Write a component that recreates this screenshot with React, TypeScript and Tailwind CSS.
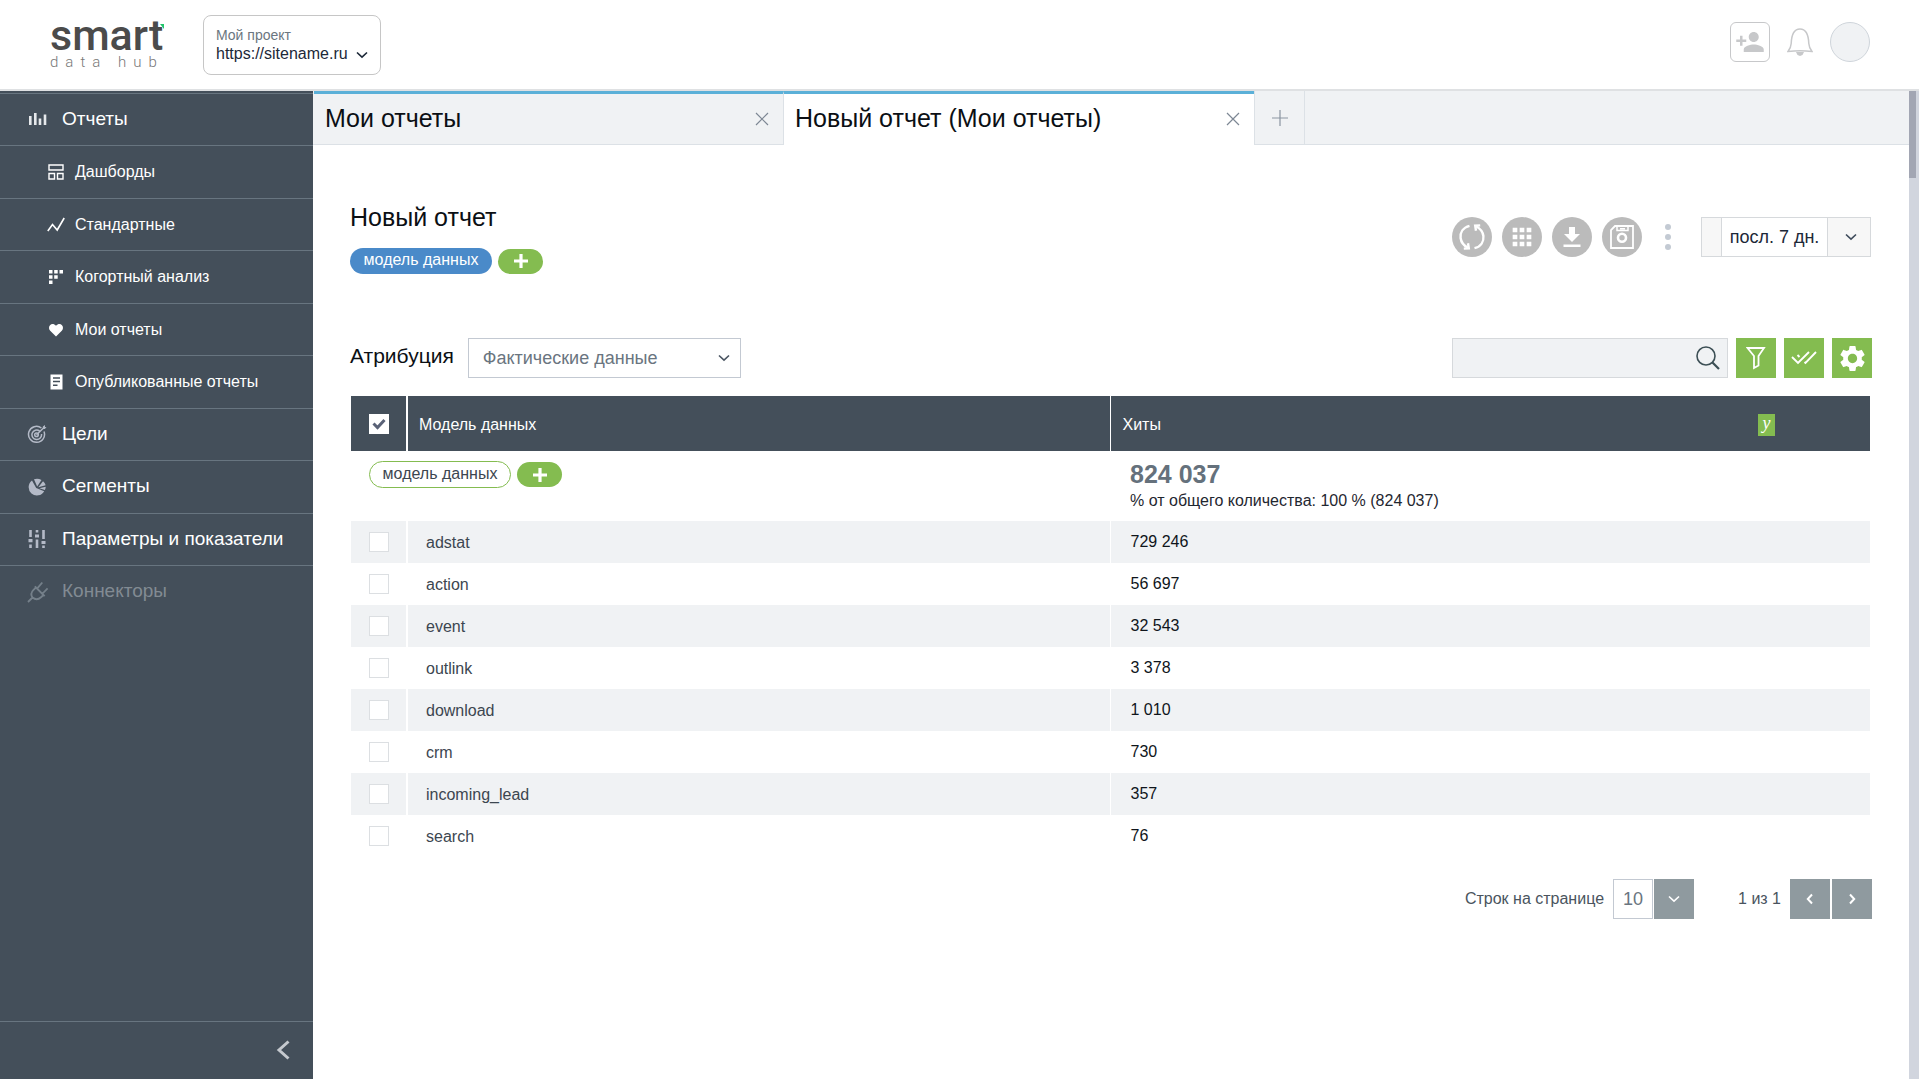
import { useState } from "react";
import type { ReactNode } from "react";
import { MdApps, MdPersonAdd, MdSettings } from "react-icons/md";

type IconProps = { className?: string };

function Chevron({ className = "" }: IconProps) {
  return (
    <svg viewBox="0 0 12 8" fill="none" stroke="currentColor" strokeWidth="1.600" className={className} aria-hidden="true">
      <path d="M1 1.500 6 6.200l5-4.700" />
    </svg>
  );
}

function ChevronSide({ className = "" }: IconProps) {
  return (
    <svg viewBox="0 0 8 12" fill="none" stroke="currentColor" strokeWidth="2" className={className} aria-hidden="true">
      <path d="M6 1.500 1.800 6 6 10.500" />
    </svg>
  );
}

function BarsIcon() {
  return (
    <svg viewBox="0 0 20 20" className="size-5" fill="none" stroke="#e6e9ec" strokeWidth="2.600">
      <path d="M3.300 7v9M8.300 4v12M13 9.500V16M18 5.500V16" />
    </svg>
  );
}

function DashboardIcon() {
  return (
    <svg viewBox="0 0 16 16" className="size-4" fill="none" stroke="#fff" strokeWidth="1.400">
      <path d="M1 1h14v5H1zM1 9.500h5.500V15H1zM9.500 9.500H15V15H9.500z" />
    </svg>
  );
}

function TrendIcon() {
  return (
    <svg viewBox="0 0 18 16" className="h-4 w-[18px]" fill="none" stroke="#fff" strokeWidth="1.600">
      <path d="M.8 14 5.500 7.500l4.700 5.500L17.200 1" />
    </svg>
  );
}

function CohortIcon() {
  return (
    <svg viewBox="0 0 16 16" className="size-4" fill="#fff">
      <path d="M1 1h3.500v3.500H1zM6.200 1h3.500v3.500H6.200zM11.500 1H15v3.500h-3.500zM1 6.200h3.500v3.500H1zM6.200 6.200h3.500v3.500H6.200zM1 11.500h3.500V15H1z" />
    </svg>
  );
}

function HeartIcon() {
  return (
    <svg viewBox="0 0 16 16" className="size-4" fill="#fff">
      <path d="M8 14.500 2.200 8.800C.7 7.200.6 4.700 2 3.200c1.500-1.500 4-1.600 6 .6 2-2.200 4.500-2.100 6-.6 1.400 1.500 1.300 4-.2 5.600z" />
    </svg>
  );
}

function DocumentIcon() {
  return (
    <svg viewBox="0 0 16 16" className="size-4">
      <path fill="#fff" d="M2.500.5h12v15h-12z" />
      <path stroke="#444f5a" strokeWidth="1.500" d="M5 4h7M5 7.600h7M5 11.200h4.500" />
    </svg>
  );
}

function TargetIcon() {
  return (
    <svg viewBox="0 0 20 20" className="size-5" fill="none" stroke="#b4bac7" strokeWidth="1.500">
      <path d="M14.400 4A8 8 0 1 0 17 7.500M12.500 6.800a4.800 4.800 0 1 0 2 3.200M9.500 10.800 16 4.500" />
      <circle cx="9.500" cy="10.800" r="1.800" />
      <path d="m15.500 5 .4-2.600L18 1v2l1.500.3-1.700 1.800z" fill="#b4bac7" stroke="none" />
    </svg>
  );
}

function PieIcon() {
  return (
    <svg viewBox="0 0 20 20" className="size-5" fill="#b4bac7">
      <path d="M5 3.500 9.200 11l8 3.200A8.300 8.300 0 1 1 5 3.500z" />
      <path d="M7 2.200A9 9 0 0 1 14.500 3l-4.300 6.500z" />
      <path d="M16 4.300c1.500 1.300 2.300 2.600 2.600 4l-7.300 2z" />
      <path d="M18.700 9.800c0 1-.2 2-.8 3.200l-5.500-1.700z" />
    </svg>
  );
}

function SlidersIcon() {
  return (
    <svg viewBox="0 0 20 20" className="size-5" fill="none" stroke="#b4bac7" strokeWidth="2.600">
      <path d="M3.500 1v7M3.500 15.500V19M10 1v2.500M10 10.500V19M16.500 1v9M16.500 16.500V19" />
      <path strokeWidth="4" d="M3.500 10v3.200M10 5.400v3.200M16.500 12v3" />
    </svg>
  );
}

function PlugIcon() {
  return (
    <svg viewBox="0 0 22 22" className="size-[22px]" fill="none" stroke="#75808a" strokeWidth="1.800">
      <path d="M1 21l4.500-4.500M5.500 16.500C3.800 14 4.300 11 6.500 8.800L9 6.500l7.500 7.500-2.500 2.200c-2.500 2.300-5.800 2.500-8.500.3zM7.800 5.300l9.900 9.900M10.500 7.200 15.300 1.500M15.600 12.500l5-5.200" />
    </svg>
  );
}

type Item = { label: string; icon: ReactNode; sub?: boolean; muted?: boolean };

const menu: Item[] = [
  { label: "Отчеты", icon: <BarsIcon /> },
  { label: "Дашборды", icon: <DashboardIcon />, sub: true },
  { label: "Стандартные", icon: <TrendIcon />, sub: true },
  { label: "Когортный анализ", icon: <CohortIcon />, sub: true },
  { label: "Мои отчеты", icon: <HeartIcon />, sub: true },
  { label: "Опубликованные отчеты", icon: <DocumentIcon />, sub: true },
  { label: "Цели", icon: <TargetIcon /> },
  { label: "Сегменты", icon: <PieIcon /> },
  { label: "Параметры и показатели", icon: <SlidersIcon /> },
  { label: "Коннекторы", icon: <PlugIcon />, muted: true },
];

const rows = [
  ["adstat", "729 246"],
  ["action", "56 697"],
  ["event", "32 543"],
  ["outlink", "3 378"],
  ["download", "1 010"],
  ["crm", "730"],
  ["incoming_lead", "357"],
  ["search", "76"],
];

function Header() {
  return (
    <header className="flex h-[91px] shrink-0 items-start justify-between border-b-2 border-[#dfe1e3] pr-[49px] pl-[50px]">
      <div className="flex items-start">
        <a href="#" aria-label="smart data hub" className="relative mt-3.5 block w-[114px] text-[#4b4b4b]">
          <span className="block font-[Roboto] text-[43px] leading-[42px] font-medium">smart</span>
          <svg viewBox="0 0 4 5" className="absolute top-2.5 right-0 h-[5px] w-1" fill="#21c56b" aria-hidden="true">
            <path d="M0 0h4v5z" />
          </svg>
          <span className="block font-[Roboto] text-[15px] leading-3 font-light tracking-[7px] whitespace-nowrap text-[#777]">data hub</span>
        </a>
        <button className="mt-[15px] ml-[39px] flex h-[60px] w-[178px] flex-col justify-center rounded-lg border border-[#c6c6c6] pl-3 text-left">
          <span className="text-sm leading-[18px] text-[#6b7680]">Мой проект</span>
          <span className="flex items-center gap-2 text-base leading-5 text-[#1c2838]">
            https://sitename.ru
            <Chevron className="mt-0.5 h-2 w-3" />
          </span>
        </button>
      </div>
      <div className="mt-[22px] flex items-center text-[#c7c8ca]">
        <button aria-label="Добавить пользователя" className="flex size-10 items-center justify-center rounded-md border border-[#c7c8ca]">
          <MdPersonAdd className="size-[30px]" />
        </button>
        <button aria-label="Уведомления" className="ml-4 flex h-10 w-7 items-center justify-center">
          <svg viewBox="0 0 26 30" className="h-[30px] w-[26px]" fill="none" stroke="currentColor" strokeWidth="1.500">
            <path d="M1 24.500c2-2.500 3-4.500 3.200-8C4.500 7.500 7 2 13 2s8.500 5.500 8.800 14.500c.2 3.500 1.200 5.500 3.200 8-6-.7-18-.7-24 0z" />
            <path fill="currentColor" stroke="none" d="M9 25h8l-1.500 3-2.500 1-2.500-1z" />
          </svg>
        </button>
        <button aria-label="Профиль" className="ml-4 size-10 rounded-full border border-[#cfd5db] bg-[#f0f2f4]" />
      </div>
    </header>
  );
}

function Sidebar() {
  return (
    <aside className="flex w-[313px] shrink-0 flex-col bg-[#444f5a] pt-0.5 text-white">
      <nav>
        <ul>
          {menu.map((m) => (
            <li key={m.label} className="h-[52px] border-t border-[#687580] even:h-[53px]">
              <a href="#" className={m.sub ? "flex h-full items-center gap-2.5 pl-[47px] text-base" : "flex h-full items-center gap-[11px] pb-px pl-[27px] text-[19px]"}>
                <span className={m.sub ? "flex w-[18px] justify-center" : "flex w-6 justify-start"}>{m.icon}</span>
                <span className={m.muted ? "text-[#828b93]" : "text-white"}>{m.label}</span>
              </a>
            </li>
          ))}
        </ul>
      </nav>
      <button aria-label="Свернуть меню" className="mt-auto flex h-[58px] items-center justify-end border-t border-[#687580] pr-[23px] pb-0.5">
        <svg viewBox="0 0 14 20" className="h-5 w-3.5" fill="none" stroke="#c5c9ce" strokeWidth="3">
          <path d="M12.500 1.500 3 10l9.500 8.500" />
        </svg>
      </button>
    </aside>
  );
}

function CloseIcon() {
  return (
    <svg viewBox="0 0 14 14" className="size-3.5" fill="none" stroke="#7d8794" strokeWidth="1.200">
      <path d="m1 1 12 12M13 1 1 13" />
    </svg>
  );
}

function Tabs() {
  return (
    <div className="flex h-[54px] border-b border-[#dce1e6] bg-[#f0f2f4] pl-px">
      <div className="flex w-[470px] items-center justify-between border-t-[3px] border-r border-t-[#5bb0d8] border-r-[#dce1e6] pr-3.5 pl-[11px]">
        <button className="text-[25px] text-[#0b0f14]">Мои отчеты</button>
        <button aria-label="Закрыть"><CloseIcon /></button>
      </div>
      <div className="-mb-px flex w-[470px] items-center justify-between border-t-[3px] border-[#5bb0d8] bg-white pr-3.5 pb-px pl-[11px]">
        <button className="text-[25px] text-[#0b0f14]">Новый отчет (Мои отчеты)</button>
        <button aria-label="Закрыть"><CloseIcon /></button>
      </div>
      <button aria-label="Новая вкладка" className="flex w-[51px] items-center justify-center border-x border-[#dce1e6]">
        <svg viewBox="0 0 16 16" className="size-4" stroke="#8b95a1" strokeWidth="1.200">
          <path d="M8 0v16M0 8h16" />
        </svg>
      </button>
    </div>
  );
}

function PlusPill() {
  return (
    <button aria-label="Добавить" className="flex h-[25px] w-[45px] items-center justify-center rounded-full bg-[#84bc50]">
      <svg viewBox="0 0 16 16" className="size-4" stroke="#fff" strokeWidth="3.200">
        <path d="M8 1v14M1 8h14" />
      </svg>
    </button>
  );
}

function RoundButton({ label, children }: { label: string; children: ReactNode }) {
  return (
    <button aria-label={label} className="flex size-10 items-center justify-center rounded-full bg-[#bbb] text-white">
      {children}
    </button>
  );
}

function ReportHead() {
  return (
    <div className="mr-px flex items-start justify-between">
      <div>
        <h1 className="text-[25px] leading-8 text-[#0b0f14]">Новый отчет</h1>
        <div className="mt-[15px] flex items-center gap-1.5">
          <span className="h-[26px] w-[142px] rounded-full bg-[#4a8ac9] text-center text-base leading-6 text-white">модель данных</span>
          <PlusPill />
        </div>
      </div>
      <div className="mt-4 flex items-center gap-2.5">
        <RoundButton label="Обновить">
          <svg viewBox="0 0 28 28" className="size-7" fill="none" stroke="currentColor" strokeWidth="2.400">
            <path d="M11.500 2.800C5 4.500 2 9.500 2.600 15c.5 4.200 3 7.500 7.400 9.800M16.500 25.200C23 23.500 26 18.500 25.400 13c-.5-4.200-3-7.500-7.400-9.800" />
            <path d="m5.800 25.600 5-.3-.8-5M22.200 2.400l-5 .3.800 5" />
          </svg>
        </RoundButton>
        <RoundButton label="Таблица">
          <MdApps className="size-7" />
        </RoundButton>
        <RoundButton label="Скачать">
          <svg viewBox="0 0 20 20" className="size-5" fill="currentColor">
            <path d="M7 0h6v7h5l-8 8-8-8h5zM1.500 17.500h17V20h-17z" />
          </svg>
        </RoundButton>
        <RoundButton label="Сохранить">
          <svg viewBox="0 0 24 24" className="size-6" fill="none" stroke="currentColor" strokeWidth="1.800">
            <path d="M5 1h18v22H1V5z" />
            <path strokeWidth="1.500" d="M7 1v4.500h11V1M10 3.800h5" />
            <circle cx="12" cy="12.800" r="4" strokeWidth="2.600" />
          </svg>
        </RoundButton>
        <button aria-label="Ещё" className="ml-[13px] flex h-10 w-[6px] flex-col justify-center gap-1">
          <span className="size-1.5 rounded-full bg-[#c3cad3]" />
          <span className="size-1.5 rounded-full bg-[#c3cad3]" />
          <span className="size-1.5 rounded-full bg-[#c3cad3]" />
        </button>
        <button className="ml-[20px] flex h-10 w-[170px] border border-[#d6d9dc] bg-[#f7f7f7] pl-[19px] text-lg text-[#1c2838]">
          <span className="flex h-full w-[107px] items-center justify-center border-x border-[#d6d9dc] bg-white">посл. 7 дн.</span>
          <span className="flex h-full flex-1 items-center justify-center text-[#3f4c5c]">
            <Chevron className="ml-1 h-2 w-3" />
          </span>
        </button>
      </div>
    </div>
  );
}

function GreenButton({ label, children }: { label: string; children: ReactNode }) {
  return (
    <button aria-label={label} className="flex size-10 items-center justify-center bg-[#84bc50] text-white">
      {children}
    </button>
  );
}

function Toolbar() {
  return (
    <div className="mt-16 flex justify-between">
      <div className="flex items-center gap-3.5">
        <label htmlFor="attribution" className="pb-1 text-[21px] leading-8 text-[#0b0f14]">Атрибуция</label>
        <div className="relative">
          <select id="attribution" className="h-10 w-[273px] appearance-none border border-[#c3c9d2] bg-white pl-3.5 text-lg text-[#6a7580]">
            <option>Фактические данные</option>
          </select>
          <Chevron className="pointer-events-none absolute top-4 right-[11px] h-2 w-3 text-[#4a5562]" />
        </div>
      </div>
      <div className="flex items-center">
        <div className="relative mr-2">
          <input aria-label="Поиск" type="text" className="block h-10 w-[276px] border border-[#d6d9dc] bg-[#f0f2f4] pr-11 pl-3" />
          <svg viewBox="0 0 24 24" className="pointer-events-none absolute top-2 right-2 size-6" fill="none" stroke="#3c4f55" strokeWidth="1.600">
            <circle cx="10" cy="10" r="9" />
            <path strokeWidth="2.200" d="m16.500 16.500 6.500 6.500" />
          </svg>
        </div>
        <div className="flex gap-2">
          <GreenButton label="Фильтр">
            <svg viewBox="0 0 20 24" className="h-6 w-5" fill="none" stroke="currentColor" strokeWidth="1.800">
              <path d="M1.500 2h16.500l-5.500 8v9.500L8 22V10z" />
            </svg>
          </GreenButton>
          <GreenButton label="Выбрать">
            <svg viewBox="0 0 26 16" className="h-4 w-[26px]" fill="none" stroke="currentColor" strokeWidth="1.900">
              <path d="M1 7l6 6L18 2M6.500 5l2 2M13.500 12l1 1L25 2" />
            </svg>
          </GreenButton>
          <GreenButton label="Настройки">
            <MdSettings className="size-[31px]" />
          </GreenButton>
        </div>
      </div>
    </div>
  );
}

function ReportTable() {
  const [all, setAll] = useState(true);
  return (
    <div className="mt-[18px] mr-0.5 ml-px">
      <table className="w-full border-collapse text-left text-base text-[#3c4650]">
        <colgroup>
          <col className="w-[56px]" />
          <col className="w-[703px]" />
          <col />
        </colgroup>
        <thead>
          <tr className="h-[55px] bg-[#444f5a] text-white">
            <th className="border-r-2 border-white font-normal">
              <label className="relative mx-auto flex size-5 items-center justify-center bg-white">
                <input type="checkbox" aria-label="Выбрать все" checked={all} onChange={() => setAll(!all)} className="absolute size-5 appearance-none" />
                {all && (
                  <svg viewBox="0 0 14 12" className="pointer-events-none relative h-3 w-3.5" fill="none" stroke="#5a6277" strokeWidth="3">
                    <path d="m1.500 5.500 4 4 7-7.500" />
                  </svg>
                )}
              </label>
            </th>
            <th className="border-r border-white pt-0.5 pl-[11px] font-normal">Модель данных</th>
            <th className="pt-0.5 pl-3 font-normal">
              <span className="flex items-center justify-between pr-[95px]">
                Хиты
                <span className="flex h-[22px] w-[17px] items-center justify-center bg-[#84bc50] pb-1 font-['Liberation_Serif',serif] text-lg leading-none italic">y</span>
              </span>
            </th>
          </tr>
        </thead>
        <tbody>
          <tr className="h-[70px] align-top">
            <td colSpan={2} className="pt-2.5 pl-[18px]">
              <div className="flex items-center gap-1.5">
                <span className="h-[27px] w-[142px] rounded-full border border-[#84bc50] text-center text-base leading-6">модель данных</span>
                <PlusPill />
              </div>
            </td>
            <td className="pt-2 pl-5">
              <div className="text-[25px] leading-[30px] font-bold text-[#65717c]">824 037</div>
              <div className="text-base leading-6 text-[#1f2730]">% от общего количества: 100 % (824 037)</div>
            </td>
          </tr>
          {rows.map(([name, hits]) => (
            <tr key={name} className="h-[42px] odd:bg-white even:bg-[#f0f2f4]">
              <td className="border-r-2 border-white">
                <input type="checkbox" aria-label={name} className="mx-auto block size-5 appearance-none border border-[#dcdfe2] bg-white" />
              </td>
              <td className="border-r border-white pt-0.5 pl-[18px]">{name}</td>
              <td className="pl-5 text-[#0f151b]">{hits}</td>
            </tr>
          ))}
        </tbody>
      </table>
    </div>
  );
}

function Pagination() {
  return (
    <div className="mt-[22px] flex items-center justify-end text-base text-[#4a545e]">
      <label htmlFor="page-size">Строк на странице</label>
      <div className="relative ml-[9px] flex gap-px">
        <select id="page-size" className="h-10 w-10 appearance-none border border-[#c3c9d2] bg-white pl-[9px] text-lg text-[#6a7580]">
          <option>10</option>
        </select>
        <span className="flex size-10 items-center justify-center bg-[#8f9a9f] text-white">
          <Chevron className="h-2 w-3" />
        </span>
      </div>
      <span className="ml-11">1 из 1</span>
      <div className="ml-[9px] flex gap-0.5">
        <button aria-label="Назад" className="flex size-10 items-center justify-center bg-[#8f9a9f] text-white">
          <ChevronSide className="h-3 w-2" />
        </button>
        <button aria-label="Вперёд" className="flex size-10 items-center justify-center bg-[#8f9a9f] text-white">
          <ChevronSide className="h-3 w-2 rotate-180" />
        </button>
      </div>
    </div>
  );
}

export default function App() {
  return (
    <div className="flex h-screen flex-col bg-white font-['Liberation_Sans',sans-serif]">
      <Header />
      <div className="flex min-h-0 flex-1">
        <Sidebar />
        <main className="min-w-0 flex-1 overflow-hidden">
          <Tabs />
          <div className="px-[37px] pt-14">
            <ReportHead />
            <Toolbar />
            <ReportTable />
            <Pagination />
          </div>
        </main>
        <div className="w-2.5 shrink-0 bg-[#d1d5de]">
          <div className="h-[87px] w-[7px] bg-[#a2a6b3]" />
        </div>
      </div>
    </div>
  );
}
